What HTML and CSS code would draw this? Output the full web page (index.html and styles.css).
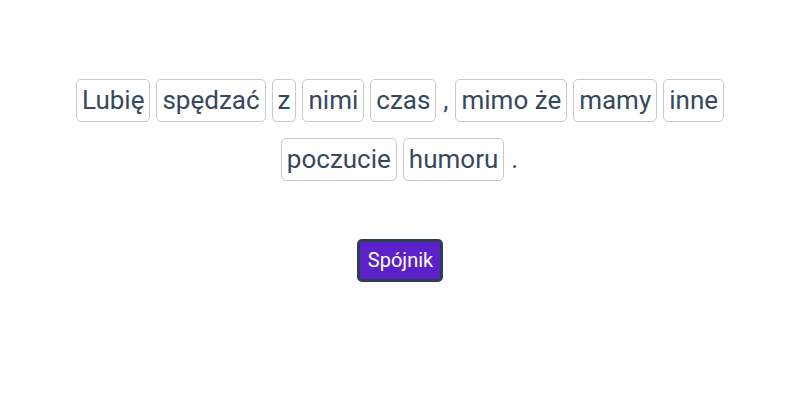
FILE: index.html
```html
<!DOCTYPE html>
<html lang="pl">
<head>
<meta charset="utf-8">
<title>Zdanie</title>
<link rel="stylesheet" href="styles.css">
</head>
<body>
<main class="app">
  <div class="sentence">
    <span class="word">Lubię</span>
    <span class="word">spędzać</span>
    <span class="word">z</span>
    <span class="word">nimi</span>
    <span class="word">czas</span>
    <span class="punct">,</span>
    <span class="word">mimo że</span>
    <span class="word">mamy</span>
    <span class="word">inne</span>
    <span class="word">poczucie</span>
    <span class="word">humoru</span>
    <span class="punct">.</span>
  </div>
  <div class="actions">
    <button class="tag-btn" type="button">Spójnik</button>
  </div>
</main>
</body>
</html>
```
FILE: styles.css
```css
html, body {
  margin: 0;
  padding: 0;
  background: #ffffff;
}

body {
  font-family: Roboto, "Noto Sans", Arial, sans-serif;
  color: #34495e;
}

.app {
  padding-top: 79px;
  display: flex;
  flex-direction: column;
  align-items: center;
}

.sentence {
  width: 740px;
  display: flex;
  flex-wrap: wrap;
  justify-content: center;
  align-items: center;
  gap: 16px 6px;
}

.word {
  font-size: 26px;
  line-height: 31px;
  padding: 5px 5px;
  border: 1px solid #c8c8c8;
  border-radius: 5px;
  white-space: nowrap;
}

.punct {
  font-size: 26px;
  line-height: 31px;
  padding: 0 1px;
}

.actions {
  margin-top: 58px;
}

.tag-btn {
  font-family: Roboto, "Noto Sans", Arial, sans-serif;
  font-size: 20px;
  line-height: 24px;
  color: #ffffff;
  background: #5b20c8;
  border: 3px solid #2f3f52;
  border-radius: 5px;
  padding: 6px 7px 7px 8px;
  cursor: pointer;
}
```
